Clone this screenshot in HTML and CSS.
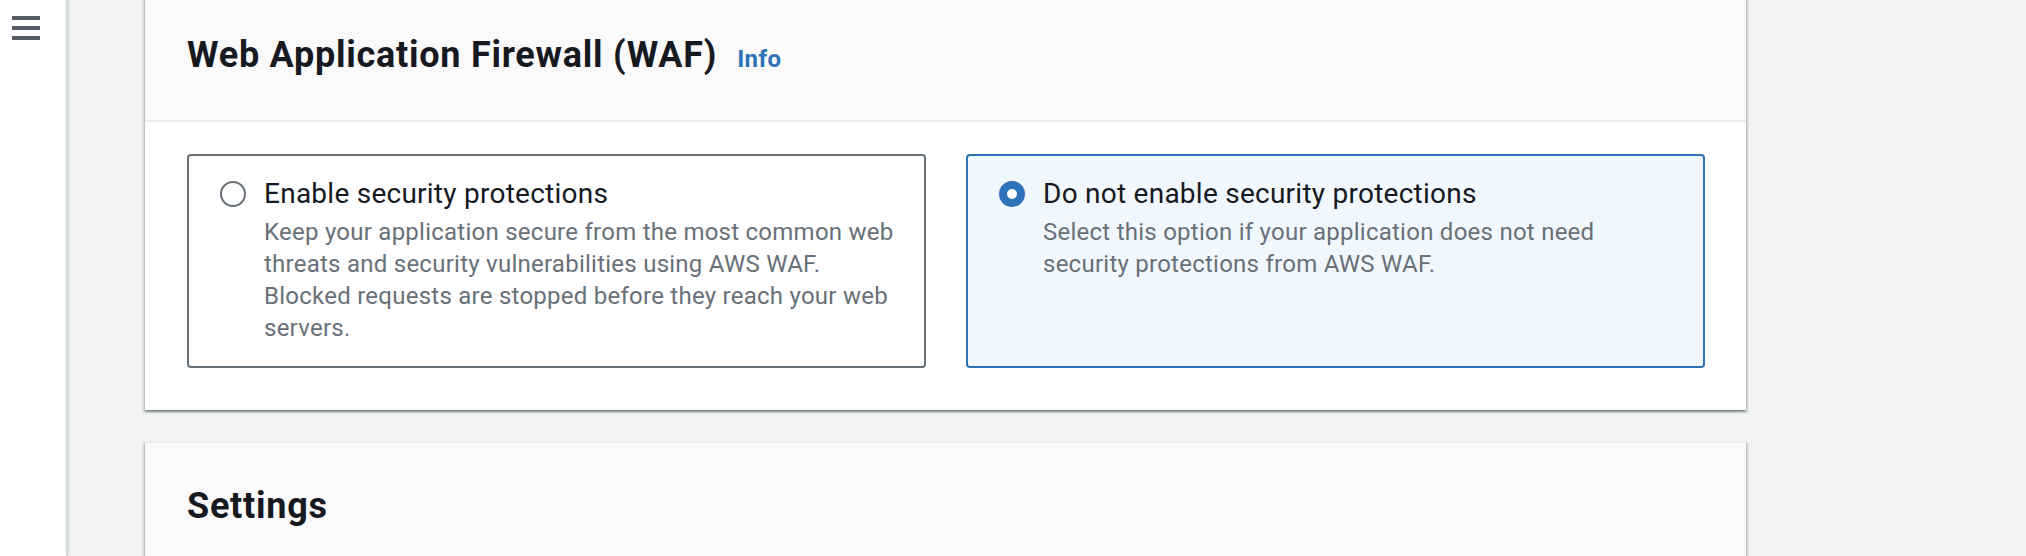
FILE: index.html
```html
<!DOCTYPE html>
<html lang="en">
<head>
<meta charset="utf-8">
<title>Web Application Firewall (WAF)</title>
<link rel="stylesheet" href="styles.css">
</head>
<body>
<div class="layout">
  <nav class="sidenav">
    <button class="menu-btn" aria-label="Open navigation">
      <span class="bar"></span><span class="bar"></span><span class="bar"></span>
    </button>
  </nav>
  <main class="content">
    <section class="container container-first">
      <header class="container-header">
        <h2 class="container-title">Web Application Firewall (WAF)</h2>
        <a class="info-link" href="#">Info</a>
      </header>
      <div class="container-body">
        <div class="tiles">
          <label class="tile">
            <span class="radio"></span>
            <span class="tile-text">
              <span class="tile-label">Enable security protections</span>
              <span class="tile-desc">Keep your application secure from the most common web threats and security vulnerabilities using AWS WAF. Blocked requests are stopped before they reach your web servers.</span>
            </span>
          </label>
          <label class="tile tile-selected">
            <span class="radio radio-checked"></span>
            <span class="tile-text">
              <span class="tile-label">Do not enable security protections</span>
              <span class="tile-desc">Select this option if your application does not need security protections from AWS WAF.</span>
            </span>
          </label>
        </div>
      </div>
    </section>
    <section class="container">
      <header class="container-header">
        <h2 class="container-title">Settings</h2>
      </header>
      <div class="container-body"></div>
    </section>
  </main>
</div>
</body>
</html>
```
FILE: styles.css
```css
* { box-sizing: border-box; }
html, body { margin: 0; padding: 0; }
body {
  background: #f2f3f3;
  font-family: Roboto, "Noto Sans", "Liberation Sans", sans-serif;
  color: #16191f;
  height: 556px;
  overflow: hidden;
}
.layout {
  display: flex;
  align-items: stretch;
  height: 556px;
}
.sidenav {
  width: 68px;
  flex: none;
  background: #ffffff;
  border-right: 2px solid #d5dbdb;
  box-shadow: 1px 0 2px rgba(0, 28, 36, 0.12);
  padding: 16px 0 0 12px;
}
.menu-btn {
  display: flex;
  flex-direction: column;
  gap: 6px;
  padding: 0;
  border: 0;
  background: none;
  width: 28px;
}
.menu-btn .bar {
  display: block;
  width: 28px;
  height: 4px;
  background: #545b64;
}
.content {
  width: 1601px;
  margin-left: 77px;
  margin-top: -10px;
  flex: none;
}
.container {
  background: #ffffff;
  border-top: 2px solid #eaeded;
  box-shadow: 0 2px 2px 0 rgba(0, 28, 36, 0.3), 2px 2px 2px 0 rgba(0, 28, 36, 0.15), -2px 2px 2px 0 rgba(0, 28, 36, 0.15);
  margin-bottom: 31px;
}
.container-header {
  background: #fafafa;
  border-bottom: 2px solid #eaeded;
  padding: 41px 42px 43px;
  display: flex;
  align-items: baseline;
  gap: 20px;
}
.container-title {
  margin: 0;
  font-size: 36px;
  line-height: 44px;
  font-weight: 700;
  letter-spacing: 0.75px;
  color: #16191f;
}
.info-link {
  font-size: 24px;
  font-weight: 700;
  letter-spacing: 0.4px;
  color: #2e73b8;
  text-decoration: none;
}
.container-body {
  padding: 32px 41px 42px 42px;
}
.tiles {
  display: grid;
  grid-template-columns: 1fr 1fr;
  gap: 40px;
}
.tile {
  display: flex;
  align-items: flex-start;
  gap: 18px;
  border: 2px solid #687078;
  border-radius: 4px;
  padding: 18px 24px 22px 31px;
  background: #ffffff;
  cursor: pointer;
}
.tile-selected {
  border-color: #2e73b8;
  background: #f1f8fd;
}
.radio {
  flex: none;
  width: 26px;
  height: 26px;
  margin-top: 7px;
  border-radius: 50%;
  border: 2px solid #687078;
  background: #ffffff;
}
.radio-checked {
  border: 8px solid #2e73b8;
}
.tile-text {
  display: flex;
  flex-direction: column;
  gap: 2px;
}
.tile-label {
  font-size: 28px;
  line-height: 40px;
  letter-spacing: 0.25px;
  color: #16191f;
}
.tile-desc {
  font-size: 24px;
  line-height: 32px;
  letter-spacing: 0.25px;
  color: #687078;
}
```
